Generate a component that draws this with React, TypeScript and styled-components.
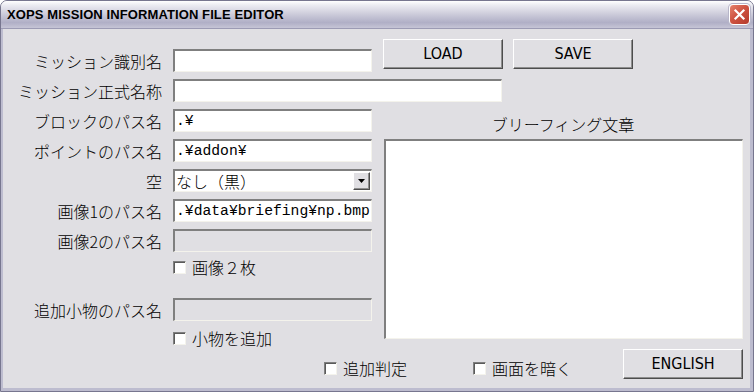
import styled, { createGlobalStyle } from "styled-components";

const GlobalStyle = createGlobalStyle`
  html, body {
    margin: 0;
    padding: 0;
    background: #ffffff;
  }
  * {
    box-sizing: border-box;
  }
`;

const UI_FONT = `"Noto Sans CJK JP", "Noto Sans", sans-serif`;
const MONO_FONT = `"Liberation Mono", "DejaVu Sans Mono", "Noto Sans CJK JP", monospace`;
const BUTTON_FONT = `"Liberation Sans Narrow", "DejaVu Sans Condensed", "Liberation Sans", sans-serif`;

const Window = styled.div`
  width: 754px;
  height: 392px;
  display: flex;
  flex-direction: column;
  border: 1px solid #77768f;
  border-radius: 7px 7px 0 0;
  background: #e0dfe3;
  overflow: hidden;
`;

const TitleBar = styled.div`
  height: 28px;
  flex: none;
  display: flex;
  align-items: center;
  justify-content: space-between;
  padding: 0 3px 0 6px;
  background: linear-gradient(
    to bottom,
    #ffffff 0%,
    #ececf2 15%,
    #d0cfdd 45%,
    #b0afc6 80%,
    #c6c5d6 100%
  );
  border-bottom: 1px solid #9c9bb4;
`;

const Title = styled.span`
  font: bold 13px "Liberation Sans", Arial, sans-serif;
  letter-spacing: 0.1px;
  color: #000;
`;

const CloseButton = styled.div`
  width: 21px;
  height: 21px;
  border-radius: 4px;
  border: 1px solid #ffffff;
  background: linear-gradient(135deg, #e5826c 0%, #cf5442 45%, #b43a2c 100%);
  display: flex;
  align-items: center;
  justify-content: center;
  box-shadow: 0 0 0 1px #b7b6c9;
`;

const Client = styled.div`
  flex: 1;
  display: flex;
  flex-direction: column;
  border-left: 2px solid #bdbccf;
  border-right: 3px solid #bdbccf;
  border-bottom: 3px solid #bdbccf;
`;

const Top = styled.div`
  height: 320px;
  flex: none;
  display: flex;
  gap: 11px;
`;

const LeftCol = styled.div`
  width: 369px;
  padding-top: 20px;
  display: flex;
  flex-direction: column;
  gap: 7px;
`;

const FieldRow = styled.div`
  height: 23px;
  display: grid;
  grid-template-columns: 159px 199px;
  column-gap: 11px;
  align-items: center;
`;

const Label = styled.span`
  text-align: right;
  white-space: nowrap;
  font: 300 16px/1 ${UI_FONT};
  color: #000;
`;

const sunken = `
  border-style: solid;
  border-width: 2px 1px 1px 2px;
  border-color: #7f7f7f #f4f3ec #f4f3ec #7f7f7f;
`;

const TextBox = styled.input<{ $wide?: boolean }>`
  width: ${(p) => (p.$wide ? 329 : 199)}px;
  height: 23px;
  ${sunken}
  background: ${(p) => (p.disabled ? "#e0dfe3" : "#ffffff")};
  font: 14.7px/1 ${MONO_FONT};
  color: #000;
  padding: 0 1px;
  margin: 0;
  outline: none;
`;

const Combo = styled.div`
  width: 199px;
  height: 23px;
  ${sunken}
  background: #ffffff;
  display: flex;
  align-items: center;
`;

const ComboText = styled.span`
  flex: 1;
  padding-left: 1px;
  font: 300 16px/1 ${UI_FONT};
  color: #000;
`;

const raised = `
  border-style: solid;
  border-width: 1px;
  border-color: #ffffff #4d4d4d #4d4d4d #ffffff;
  box-shadow: inset -1px -1px 0 #8e8e8e;
  background: #e0dfe3;
`;

const DropButton = styled.div`
  width: 17px;
  height: 18px;
  margin-right: 1px;
  ${raised}
  display: flex;
  align-items: center;
  justify-content: center;
`;

const CheckRow = styled.div<{ $height: number; $pad: number }>`
  height: ${(p) => p.$height}px;
  padding-top: ${(p) => p.$pad}px;
  padding-left: 170px;
  display: flex;
  align-items: flex-start;
`;

const Check = styled.label<{ $width?: number }>`
  display: flex;
  align-items: center;
  gap: 6px;
  height: 16px;
  width: ${(p) => (p.$width ? `${p.$width}px` : "auto")};
  font: 300 16px/1 ${UI_FONT};
  color: #000;
  white-space: nowrap;
`;

const Box = styled.span`
  width: 13px;
  height: 13px;
  flex: none;
  border-style: solid;
  border-width: 1px;
  border-color: #7f7f7f #f4f3ec #f4f3ec #7f7f7f;
  box-shadow: inset 1px 1px 0 #5a5a5a;
  background: #ffffff;
`;

const RightCol = styled.div`
  width: 360px;
  padding-top: 10px;
  display: flex;
  flex-direction: column;
`;

const ButtonRow = styled.div`
  display: flex;
  gap: 10px;
`;

const Button = styled.button`
  width: 120px;
  height: 30px;
  ${raised}
  padding: 0;
  font: 16px/1 ${BUTTON_FONT};
  color: #000;
`;

const BriefLabel = styled.div`
  margin-top: 47px;
  height: 16px;
  text-align: center;
  font: 300 16px/1 ${UI_FONT};
  color: #000;
`;

const Briefing = styled.textarea`
  margin: 7px 0 0 1px;
  width: 359px;
  height: 200px;
  ${sunken}
  background: #ffffff;
  resize: none;
  outline: none;
  padding: 2px;
  font: 14.7px ${MONO_FONT};
`;

const BottomBar = styled.div`
  height: 30px;
  display: flex;
  align-items: flex-start;
  padding-left: 321px;
`;

const BottomCheck = styled(Check)`
  margin-top: 11px;
`;

const fields: { label: string; value?: string; wide?: boolean }[] = [
  { label: "ミッション識別名", value: "" },
  { label: "ミッション正式名称", value: "", wide: true },
  { label: "ブロックのパス名", value: ".¥" },
  { label: "ポイントのパス名", value: ".¥addon¥" },
];

const fields2 = [
  { label: "画像1のパス名", value: ".¥data¥briefing¥np.bmp", disabled: false },
  { label: "画像2のパス名", value: "", disabled: true },
];

export default function App() {
  return (
    <>
      <GlobalStyle />
      <Window>
        <TitleBar>
          <Title>XOPS MISSION INFORMATION FILE EDITOR</Title>
          <CloseButton>
            <svg width="13" height="13" viewBox="0 0 13 13">
              <path d="M2.5 2.5 L10.5 10.5 M10.5 2.5 L2.5 10.5" stroke="#fff" strokeWidth="2.2" strokeLinecap="square" />
            </svg>
          </CloseButton>
        </TitleBar>
        <Client>
          <Top>
            <LeftCol>
              {fields.map((f) => (
                <FieldRow key={f.label}>
                  <Label>{f.label}</Label>
                  <TextBox $wide={f.wide} defaultValue={f.value} />
                </FieldRow>
              ))}
              <FieldRow>
                <Label>空</Label>
                <Combo>
                  <ComboText>なし（黒）</ComboText>
                  <DropButton>
                    <svg width="7" height="4" viewBox="0 0 7 4">
                      <path d="M0 0 H7 L3.5 4 Z" fill="#000" />
                    </svg>
                  </DropButton>
                </Combo>
              </FieldRow>
              {fields2.map((f) => (
                <FieldRow key={f.label}>
                  <Label>{f.label}</Label>
                  <TextBox defaultValue={f.value} disabled={f.disabled} />
                </FieldRow>
              ))}
              <CheckRow $height={32} $pad={0}>
                <Check>
                  <Box />
                  画像２枚
                </Check>
              </CheckRow>
              <FieldRow>
                <Label>追加小物のパス名</Label>
                <TextBox defaultValue="" disabled />
              </FieldRow>
              <CheckRow $height={18} $pad={2}>
                <Check>
                  <Box />
                  小物を追加
                </Check>
              </CheckRow>
            </LeftCol>
            <RightCol>
              <ButtonRow>
                <Button>LOAD</Button>
                <Button>SAVE</Button>
              </ButtonRow>
              <BriefLabel>ブリーフィング文章</BriefLabel>
              <Briefing defaultValue="" />
            </RightCol>
          </Top>
          <BottomBar>
            <BottomCheck $width={149}>
              <Box />
              追加判定
            </BottomCheck>
            <BottomCheck $width={150}>
              <Box />
              画面を暗く
            </BottomCheck>
            <Button>ENGLISH</Button>
          </BottomBar>
        </Client>
      </Window>
    </>
  );
}
